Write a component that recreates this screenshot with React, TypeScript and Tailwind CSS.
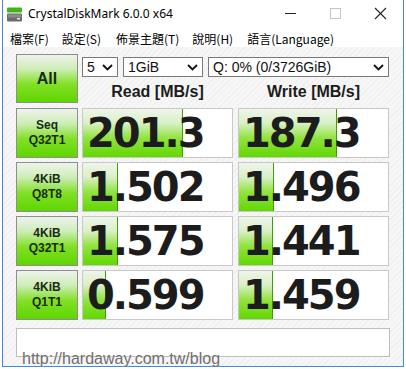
import React from 'react';

const rows = [
  { l1: 'Seq', l2: 'Q32T1', read: '201.3', write: '187.3', rw: 100, ww: 98 },
  { l1: '4KiB', l2: 'Q8T8', read: '1.502', write: '1.496', rw: 35, ww: 35 },
  { l1: '4KiB', l2: 'Q32T1', read: '1.575', write: '1.441', rw: 35, ww: 34 },
  { l1: '4KiB', l2: 'Q1T1', read: '0.599', write: '1.459', rw: 23, ww: 34 },
];

const Chevron = () => (
  <svg width="11" height="7" viewBox="0 0 11 7" className="shrink-0">
    <polyline points="1,1 5.5,5.5 10,1" fill="none" stroke="#111" strokeWidth="1.8" />
  </svg>
);

const Select = ({ value, className }: { value: string; className: string }) => (
  <div
    className={
      'h-[20px] bg-white border border-[#7a7a7a] flex items-center justify-between pl-[4px] pr-[4px] text-[14px] text-[#111] ' +
      className
    }
  >
    <span className="leading-none">{value}</span>
    <Chevron />
  </div>
);

const ResultBox = ({ value, fill }: { value: string; fill: number }) => (
  <div className="relative h-[50px] w-[151px] bg-white border border-[#c8c8c8] overflow-hidden">
    <div
      className="absolute left-0 top-0 bottom-0 border-r border-[#3f9c0c] bg-[linear-gradient(to_bottom,#f0f5ec_0%,#d8f0c4_30%,#92e340_60%,#62d802_100%)]"
      style={{ width: fill }}
    />
    <div className="relative h-full flex items-center pl-[4px] font-['DejaVu_Sans',sans-serif] font-bold text-[40px] tracking-[-2px] text-[#1c1c1c] leading-none">
      {value}
    </div>
  </div>
);

const GreenButton = ({ children, className }: { children: React.ReactNode; className: string }) => (
  <div
    className={
      'border border-[#8e8e8e] bg-[linear-gradient(to_bottom,#eef3ec_0%,#cdedb6_30%,#82e026_62%,#5ed600_100%)] flex flex-col items-center justify-center font-bold text-[#1a2a14] ' +
      className
    }
  >
    {children}
  </div>
);

export default function App() {
  return (
    <div className="w-[406px] h-[369px] bg-white relative font-['Liberation_Sans',Arial,sans-serif] overflow-hidden">
      <div className="ml-[2px] w-[402px] h-[367px] border-x border-b border-[#3d8ae0] flex flex-col bg-white">
        {/* Title bar */}
        <div className="h-[30px] flex items-center relative shrink-0">
          <svg width="17" height="15" viewBox="0 0 17 15" className="ml-[3px] mt-[-2px]">
            <rect x="1" y="0.5" width="15" height="5" rx="1" fill="#3fb618" />
            <rect x="1" y="6.5" width="15" height="8" rx="1" fill="#6b6b6b" />
            <rect x="2" y="7.5" width="13" height="3" fill="#8c8c8c" />
            <rect x="11" y="11" width="3" height="1.5" fill="#e8e8e8" />
          </svg>
          <span className="ml-[5px] text-[12px] text-black font-['Noto_Sans',sans-serif] leading-none mt-[-2px]">
            CrystalDiskMark 6.0.0 x64
          </span>
          <svg width="402" height="30" className="absolute left-0 top-0" viewBox="0 0 402 30">
            <line x1="282" y1="13.5" x2="293" y2="13.5" stroke="#222" strokeWidth="1" />
            <rect x="327.5" y="8.5" width="10" height="10" fill="none" stroke="#c4c4c4" strokeWidth="1" />
            <line x1="372" y1="8" x2="383" y2="19" stroke="#222" strokeWidth="1.1" />
            <line x1="383" y1="8" x2="372" y2="19" stroke="#222" strokeWidth="1.1" />
          </svg>
        </div>

        {/* Menu bar */}
        <div className="h-[17px] shrink-0 flex items-center text-[12px] text-black font-['Noto_Sans_CJK_TC','Noto_Sans',sans-serif] leading-none">
          <span className="ml-[7px]">檔案(F)</span>
          <span className="ml-[13px]">設定(S)</span>
          <span className="ml-[15px]">佈景主題(T)</span>
          <span className="ml-[13px]">說明(H)</span>
          <span className="ml-[14px]">語言(Language)</span>
        </div>

        {/* Client */}
        <div className="flex-1 px-[13px] pt-[7px] bg-[repeating-linear-gradient(135deg,#f6f6f6_0px,#f6f6f6_3px,#efefef_3px,#efefef_4px)] flex flex-col">
          {/* Header row */}
          <div className="flex h-[49px]">
            <GreenButton className="w-[62px] h-[49px] text-[16px]">All</GreenButton>
            <div className="ml-[4px] flex-1 flex flex-col">
              <div className="flex mt-[3px]">
                <Select value="5" className="w-[36px]" />
                <Select value="1GiB" className="ml-[5px] w-[80px]" />
                <Select value="Q: 0% (0/3726GiB)" className="ml-[5px] w-[181px]" />
              </div>
              <div className="flex mt-[7px] text-[16px] font-bold text-[#1c1c1c] leading-none">
                <div className="w-[151px] text-center">Read [MB/s]</div>
                <div className="ml-[5px] w-[151px] text-center">Write [MB/s]</div>
              </div>
            </div>
          </div>

          {/* Result rows */}
          <div className="flex flex-col gap-[4px] mt-[5px]">
            {rows.map((r, i) => (
              <div key={i} className="flex">
                <GreenButton className="w-[62px] h-[50px] text-[12px] leading-[15px]">
                  <span>{r.l1}</span>
                  <span>{r.l2}</span>
                </GreenButton>
                <div className="ml-[4px]">
                  <ResultBox value={r.read} fill={r.rw} />
                </div>
                <div className="ml-[5px]">
                  <ResultBox value={r.write} fill={r.ww} />
                </div>
              </div>
            ))}
          </div>

          {/* Comment box */}
          <div className="mt-[8px] h-[29px] bg-white border border-[#bdbdbd]" />
        </div>
      </div>

      {/* Watermark */}
      <div className="absolute left-[22px] top-[351px] text-[16px] leading-none text-[#6e6e6e] [text-shadow:0_0_2px_#ffffff]">
        http://hardaway.com.tw/blog
      </div>
    </div>
  );
}
